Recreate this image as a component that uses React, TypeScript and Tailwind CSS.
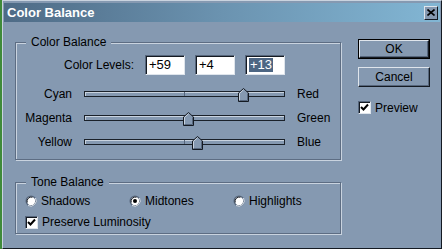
const sliders = [
  { left: 'Cyan', right: 'Red', value: 59 },
  { left: 'Magenta', right: 'Green', value: 4 },
  { left: 'Yellow', right: 'Blue', value: 13 },
];

function Thumb({ value }: { value: number }) {
  return (
    <svg
      width="11"
      height="14"
      viewBox="0 0 11 14"
      className="absolute top-[-4px]"
      style={{ left: 100 + value - 6 }}
    >
      <polygon points="0.5,13.5 0.5,5 5.5,0.5 10.5,5 10.5,13.5" fill="#8599b1" stroke="#141a22" />
      <polyline points="1.5,12.5 1.5,5.4 5.5,1.8" fill="none" stroke="#c9d3df" />
      <polyline points="9.5,5.4 9.5,12.5 1.5,12.5" fill="none" stroke="#56667c" />
    </svg>
  );
}

function Radio({ checked }: { checked?: boolean }) {
  return (
    <svg width="12" height="12" viewBox="0 0 12 12" className="shrink-0">
      <circle cx="6" cy="6" r="5.5" fill="#56667c" />
      <path d="M10.5 3 A5.5 5.5 0 0 1 3 10.5" stroke="#dfe5ec" fill="none" />
      <circle cx="6" cy="6" r="4.2" fill="#fff" />
      <path d="M2.2 7.5 A4.3 4.3 0 0 1 7.5 2.2" stroke="#141a22" fill="none" />
      {checked && <circle cx="6" cy="6" r="2" fill="#000" />}
    </svg>
  );
}

function Check() {
  return (
    <div className="w-[13px] h-[13px] shrink-0 bg-white border border-t-[#56667c] border-l-[#56667c] border-b-[#dfe5ec] border-r-[#dfe5ec] shadow-[inset_1px_1px_0_#141a22] flex items-center justify-center">
      <svg width="9" height="9" viewBox="0 0 9 9">
        <path d="M1 4 L3.5 6.5 L8 1.5" stroke="#000" strokeWidth="2" fill="none" />
      </svg>
    </div>
  );
}

function Field({ text, selected }: { text: string; selected?: boolean }) {
  return (
    <div className="w-[40px] h-[20px] bg-white border border-t-[#56667c] border-l-[#56667c] border-b-[#dfe5ec] border-r-[#dfe5ec] shadow-[inset_1px_1px_0_#141a22] flex items-center pl-[3px] text-[13px]">
      {selected ? <span className="bg-[#4d6683] text-white leading-[14px] px-[1px]">{text}</span> : <span>{text}</span>}
    </div>
  );
}

export default function App() {
  return (
    <div className="w-[442px] h-[249px] flex bg-[#8599b1] overflow-hidden font-['Liberation_Sans',Arial,sans-serif] text-[12px] text-black">
      <div className="w-[2px] bg-[#3f8a3a]" />
      <div className="flex-1 flex flex-col border border-t-[#c9d3df] border-l-[#c9d3df] border-b-[#141a22] border-r-[#141a22] pt-[2px] px-[1px]">
        <div className="h-[19px] flex items-center justify-between bg-gradient-to-r from-[#4e6b86] via-[#6b93b0] to-[#82b6d4] pl-[3px] pr-[2px]">
          <span className="text-white font-bold text-[13px]">Color Balance</span>
          <div className="w-[14px] h-[14px] bg-[#8599b1] border border-t-[#dfe5ec] border-l-[#dfe5ec] border-b-[#141a22] border-r-[#141a22] flex items-center justify-center">
            <svg width="8" height="7" viewBox="0 0 8 7">
              <path d="M0.5 0.5 L7.5 6.5 M7.5 0.5 L0.5 6.5" stroke="#000" strokeWidth="1.6" />
            </svg>
          </div>
        </div>

        <div className="flex">
          <div className="pl-[11px] pt-[13px] flex flex-col">
            <fieldset className="w-[326px] border border-[#5d6d83] shadow-[inset_1px_1px_0_#c9d3df,1px_1px_0_#c9d3df] pb-[5px]">
              <legend className="ml-[10px] px-[5px] bg-[#8599b1] leading-[14px]">Color Balance</legend>
              <div className="flex items-center pt-[6px]">
                <span className="w-[118px] text-right">Color Levels:</span>
                <div className="flex gap-[10px] ml-[11px]">
                  <Field text="+59" />
                  <Field text="+4" />
                  <Field text="+13" selected />
                </div>
              </div>
              <div className="flex flex-col mt-[7px]">
                {sliders.map((s) => (
                  <div key={s.left} className="h-[24px] flex items-center">
                    <span className="w-[56px] text-right">{s.left}</span>
                    <div className="relative ml-[12px] w-[201px] h-[6px] bg-[#8599b1] border border-[#1a212a] shadow-[inset_1px_1px_0_#c9d3df]">
                      <div className="absolute left-[99px] top-0 w-[1px] h-[4px] bg-[#56667c]" />
                      <Thumb value={s.value} />
                    </div>
                    <span className="ml-[12px]">{s.right}</span>
                  </div>
                ))}
              </div>
            </fieldset>

            <fieldset className="w-[326px] mt-[15px] border border-[#5d6d83] shadow-[inset_1px_1px_0_#c9d3df,1px_1px_0_#c9d3df] pb-[3px]">
              <legend className="ml-[10px] px-[5px] bg-[#8599b1] leading-[14px]">Tone Balance</legend>
              <div className="flex pt-[4px] pl-[9px] h-[20px] items-center">
                <div className="w-[104px] flex items-center gap-[4px]">
                  <Radio />
                  <span>Shadows</span>
                </div>
                <div className="w-[104px] flex items-center gap-[4px]">
                  <Radio checked />
                  <span>Midtones</span>
                </div>
                <div className="flex items-center gap-[4px]">
                  <Radio />
                  <span>Highlights</span>
                </div>
              </div>
              <div className="flex items-center gap-[4px] pl-[9px] mt-[5px] h-[16px]">
                <Check />
                <span>Preserve Luminosity</span>
              </div>
            </fieldset>
          </div>

          <div className="ml-[17px] pt-[17px] flex flex-col">
            <button className="w-[72px] h-[20px] border border-black flex">
              <span className="flex-1 flex items-center justify-center border border-t-[#dfe5ec] border-l-[#dfe5ec] border-b-[#141a22] border-r-[#141a22] shadow-[inset_-1px_-1px_0_#56667c]">
                OK
              </span>
            </button>
            <button className="w-[72px] h-[20px] mt-[8px] flex items-center justify-center border border-t-[#dfe5ec] border-l-[#dfe5ec] border-b-[#141a22] border-r-[#141a22] shadow-[inset_-1px_-1px_0_#56667c]">
              Cancel
            </button>
            <div className="flex items-center gap-[4px] mt-[14px] h-[13px]">
              <Check />
              <span>Preview</span>
            </div>
          </div>
        </div>
      </div>
    </div>
  );
}
